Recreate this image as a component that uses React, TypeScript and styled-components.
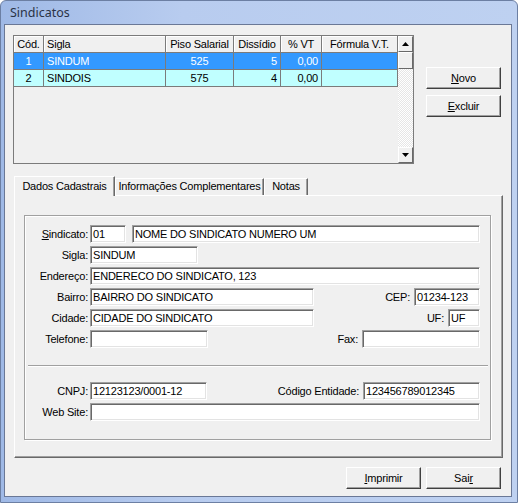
import React from "react";
import styled, { createGlobalStyle } from "styled-components";

const GlobalStyle = createGlobalStyle`
  html, body {
    margin: 0;
    padding: 0;
    background: #ffffff;
  }
  body {
    font-family: "Liberation Sans", Arial, sans-serif;
    font-size: 11px;
    letter-spacing: -0.2px;
    color: #000;
  }
`;

type Row = {
  cod: string;
  sigla: string;
  piso: string;
  dissidio: string;
  vt: string;
  formula: string;
};

const rows: Row[] = [
  { cod: "1", sigla: "SINDUM", piso: "525", dissidio: "5", vt: "0,00", formula: "" },
  { cod: "2", sigla: "SINDOIS", piso: "575", dissidio: "4", vt: "0,00", formula: "" },
];

const App = () => {
  return (
    <>
      <GlobalStyle />
      <Window>
        <TitleBar>Sindicatos</TitleBar>
        <Client>
          <TopSection>
            <Grid>
              <Table>
                <HeadCell $align="center">Cód.</HeadCell>
                <HeadCell>Sigla</HeadCell>
                <HeadCell $align="center">Piso Salarial</HeadCell>
                <HeadCell $align="center">Dissídio</HeadCell>
                <HeadCell $align="center">% VT</HeadCell>
                <HeadCell $align="center">Fórmula V.T.</HeadCell>
                {rows.map((r, i) => (
                  <React.Fragment key={r.cod}>
                    <Cell $selected={i === 0} $align="center">{r.cod}</Cell>
                    <Cell $selected={i === 0}>{r.sigla}</Cell>
                    <Cell $selected={i === 0} $align="center">{r.piso}</Cell>
                    <Cell $selected={i === 0} $align="right">{r.dissidio}</Cell>
                    <Cell $selected={i === 0} $align="right">{r.vt}</Cell>
                    <Cell $selected={i === 0}>{r.formula}</Cell>
                  </React.Fragment>
                ))}
              </Table>
              <ScrollBar>
                <ScrollButton>
                  <svg width="7" height="4" viewBox="0 0 7 4">
                    <path d="M3.5 0 L7 4 L0 4 Z" fill="#000" />
                  </svg>
                </ScrollButton>
                <Thumb />
                <Track />
                <ScrollButton>
                  <svg width="7" height="4" viewBox="0 0 7 4">
                    <path d="M0 0 L7 0 L3.5 4 Z" fill="#000" />
                  </svg>
                </ScrollButton>
              </ScrollBar>
            </Grid>
            <SideButtons>
              <Button>
                <u>N</u>ovo
              </Button>
              <Button>
                <u>E</u>xcluir
              </Button>
            </SideButtons>
          </TopSection>

          <TabArea>
            <TabStrip>
              <Tab $active $width={101}>Dados Cadastrais</Tab>
              <Tab $width={149}>Informações Complementares</Tab>
              <Tab $width={44}>Notas</Tab>
            </TabStrip>
            <Panel>
              <GroupBox>
                <FormRow>
                  <Label>
                    <u>S</u>indicato:
                  </Label>
                  <Field $width={36}>01</Field>
                  <Field $width={348} $gap={6}>NOME DO SINDICATO NUMERO UM</Field>
                </FormRow>
                <FormRow>
                  <Label>Sigla:</Label>
                  <Field $width={108}>SINDUM</Field>
                </FormRow>
                <FormRow>
                  <Label>Endereço:</Label>
                  <Field $width={390}>ENDERECO DO SINDICATO, 123</Field>
                </FormRow>
                <FormRow>
                  <Label>Bairro:</Label>
                  <Field $width={224}>BAIRRO DO SINDICATO</Field>
                  <RightPart>
                    <SideLabel>CEP:</SideLabel>
                    <Field $width={66}>01234-123</Field>
                  </RightPart>
                </FormRow>
                <FormRow>
                  <Label>Cidade:</Label>
                  <Field $width={224}>CIDADE DO SINDICATO</Field>
                  <RightPart>
                    <SideLabel>UF:</SideLabel>
                    <Field $width={32}>UF</Field>
                  </RightPart>
                </FormRow>
                <FormRow>
                  <Label>Telefone:</Label>
                  <Field $width={118} />
                  <RightPart>
                    <SideLabel>Fax:</SideLabel>
                    <Field $width={118} />
                  </RightPart>
                </FormRow>
                <Separator />
                <FormRow $top={15}>
                  <Label>CNPJ:</Label>
                  <Field $width={117}>12123123/0001-12</Field>
                  <RightPart>
                    <SideLabel>Código Entidade:</SideLabel>
                    <Field $width={117}>123456789012345</Field>
                  </RightPart>
                </FormRow>
                <FormRow>
                  <Label>Web Site:</Label>
                  <Field $width={390} />
                </FormRow>
              </GroupBox>
            </Panel>
          </TabArea>

          <BottomBar>
            <Button>
              <u>I</u>mprimir
            </Button>
            <Button>
              Sai<u>r</u>
            </Button>
          </BottomBar>
        </Client>
      </Window>
    </>
  );
};

const Window = styled.div`
  width: 518px;
  height: 503px;
  box-sizing: border-box;
  border: 1px solid #6c7fa3;
  border-radius: 6px 6px 0 0;
  background: linear-gradient(90deg, #9fb9e6 0%, #b8ccef 35%, #bed1f1 100%);
  padding: 0 5px 5px 3px;
  display: flex;
  flex-direction: column;
  overflow: hidden;
`;

const TitleBar = styled.div`
  height: 23px;
  line-height: 24px;
  padding-left: 6px;
  font-family: "Noto Sans", "Open Sans", sans-serif;
  font-size: 12.5px;
  letter-spacing: 0;
  color: #2a3346;
`;

const Client = styled.div`
  flex: 1;
  background: #f0f0f0;
  border: 1px solid #6a7896;
  display: flex;
  flex-direction: column;
`;

const TopSection = styled.div`
  display: flex;
  margin: 10px 0 0 8px;
`;

const Grid = styled.div`
  width: 401px;
  height: 129px;
  box-sizing: border-box;
  border: 1px solid #7b7b7b;
  display: flex;
  background: #f0f0f0;
`;

const Table = styled.div`
  flex: 1;
  display: grid;
  grid-template-columns: 30px 122px 68px 47px 41px 76px;
  grid-auto-rows: 17px;
  align-content: start;
`;

const HeadCell = styled.div<{ $align?: string }>`
  box-sizing: border-box;
  background: #f0f0f0;
  border-right: 1px solid #7b7b7b;
  border-bottom: 1px solid #7b7b7b;
  box-shadow: inset 1px 1px #ffffff;
  padding: 0 3px;
  line-height: 16px;
  text-align: ${(p) => p.$align || "left"};
  white-space: nowrap;
  overflow: hidden;
`;

const Cell = styled.div<{ $selected?: boolean; $align?: string }>`
  box-sizing: border-box;
  background: ${(p) => (p.$selected ? "#3399ff" : "#c0ffff")};
  color: ${(p) => (p.$selected ? "#ffffff" : "#000000")};
  border-right: 1px solid #7b7b7b;
  border-bottom: 1px solid #7b7b7b;
  padding: 0 3px;
  line-height: 16px;
  text-align: ${(p) => p.$align || "left"};
  white-space: nowrap;
  overflow: hidden;
`;

const ScrollBar = styled.div`
  width: 15px;
  display: flex;
  flex-direction: column;
`;

const ScrollButton = styled.div`
  height: 16px;
  box-sizing: border-box;
  background: #f0f0f0;
  border: 1px solid;
  border-color: #ffffff #696969 #696969 #ffffff;
  display: flex;
  align-items: center;
  justify-content: center;
`;

const Thumb = styled(ScrollButton)`
  height: 17px;
`;

const Track = styled.div`
  flex: 1;
  background: repeating-conic-gradient(#ffffff 0 25%, #e6e6e6 0 50%) 0 0 / 2px 2px;
`;

const SideButtons = styled.div`
  display: flex;
  flex-direction: column;
  gap: 6px;
  margin: 32px 0 0 12px;
`;

const Button = styled.button`
  width: 75px;
  height: 22px;
  box-sizing: border-box;
  padding: 0;
  background: #f0f0f0;
  border: 1px solid;
  border-color: #ffffff #404040 #404040 #ffffff;
  box-shadow: inset -1px -1px #a0a0a0;
  font-family: "Liberation Sans", Arial, sans-serif;
  font-size: 11px;
  letter-spacing: -0.2px;
  color: #000;
  text-align: center;
`;

const TabArea = styled.div`
  margin: 12px 0 0 9px;
  width: 489px;
`;

const TabStrip = styled.div`
  display: flex;
  align-items: flex-end;
  height: 19px;
  position: relative;
  z-index: 1;
`;

const Tab = styled.div<{ $active?: boolean; $width: number }>`
  width: ${(p) => p.$width}px;
  box-sizing: border-box;
  height: ${(p) => (p.$active ? 20 : 17)}px;
  margin-bottom: ${(p) => (p.$active ? -1 : 0)}px;
  background: #f0f0f0;
  border-top: 1px solid #ffffff;
  border-left: 1px solid #ffffff;
  border-right: 1px solid #696969;
  box-shadow: inset -1px 0 #a0a0a0;
  text-align: center;
  line-height: ${(p) => (p.$active ? 18 : 15)}px;
  white-space: nowrap;
`;

const Panel = styled.div`
  height: 263px;
  box-sizing: border-box;
  border: 1px solid;
  border-color: #ffffff #696969 #696969 #ffffff;
  box-shadow: inset -1px -1px #a0a0a0;
  padding: 19px 0 0 9px;
`;

const GroupBox = styled.div`
  width: 467px;
  height: 225px;
  box-sizing: border-box;
  border: 1px solid #a0a0a0;
  box-shadow: inset 1px 1px #ffffff, 1px 1px #ffffff;
  padding-top: 9px;
`;

const FormRow = styled.div<{ $top?: number }>`
  display: flex;
  align-items: center;
  height: 18px;
  margin-top: ${(p) => p.$top ?? 0}px;
  margin-bottom: 3px;
  padding-right: 10px;
`;

const Label = styled.div`
  width: 63px;
  margin-right: 2px;
  text-align: right;
  white-space: nowrap;
`;

const SideLabel = styled.div`
  margin-right: 4px;
  white-space: nowrap;
`;

const RightPart = styled.div`
  display: flex;
  align-items: center;
  margin-left: auto;
`;

const Field = styled.div<{ $width: number; $gap?: number }>`
  width: ${(p) => p.$width}px;
  height: 18px;
  box-sizing: border-box;
  margin-left: ${(p) => p.$gap ?? 0}px;
  background: #ffffff;
  border: 1px solid;
  border-color: #a0a0a0 #ffffff #ffffff #a0a0a0;
  box-shadow: inset 1px 1px #696969, inset -1px -1px #e3e3e3;
  padding: 0 0 0 2px;
  line-height: 16px;
  white-space: nowrap;
  overflow: hidden;
`;

const Separator = styled.div`
  height: 0;
  border-top: 1px solid #a0a0a0;
  border-bottom: 1px solid #ffffff;
  margin: 17px 2px 0 3px;
`;

const BottomBar = styled.div`
  display: flex;
  justify-content: flex-end;
  gap: 5px;
  margin-top: 9px;
  padding-right: 10px;
`;

export default App;
